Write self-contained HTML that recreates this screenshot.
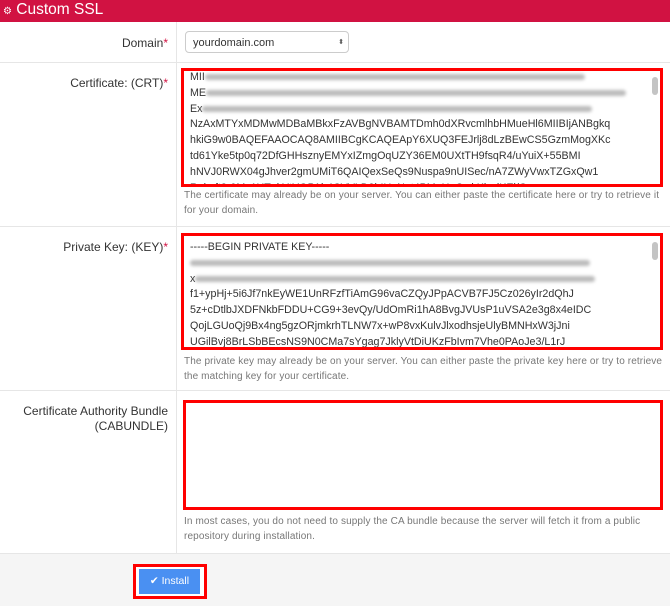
<!DOCTYPE html>
<html><head><style>
body{margin:0;width:670px;height:606px;background:#fff;font-family:"Liberation Sans",sans-serif;overflow:hidden;position:relative}
.hdr{position:absolute;left:0;top:0;width:670px;height:22px;background:#d11242;color:#fff;font-size:15.5px;line-height:20px}
.row{position:absolute;left:0;width:670px;border-bottom:1px solid #e6e6e6}
.lab{position:absolute;left:0;width:168px;text-align:right;font-size:12px;color:#333}
.lab b{color:#d11242;font-weight:normal}
.vl{position:absolute;left:176px;top:0;bottom:0;border-left:1px solid #e6e6e6}
.ta{position:absolute;border:3px solid #f00;background:#fff;font-size:10.7px;color:#333;line-height:15.8px;overflow:hidden}
.ta .in{position:absolute;left:6px;top:0;white-space:pre}
.blur{display:inline-block;height:6px;background:#bbb;border-radius:3px;filter:blur(1.5px);vertical-align:middle}
.sb{position:absolute;right:2px;top:6px;width:6px;height:18px;background:#c4c4c4;border-radius:3px}
.help{position:absolute;left:184px;font-size:10px;letter-spacing:0.12px;color:#777;line-height:14.5px;width:482px}
</style></head><body>
<div class="hdr"><span style="font-size:10px;margin-left:3px">⚙</span> Custom SSL</div>
<div class="row" style="top:22px;height:40px"><div class="vl"></div>
<div class="lab" style="top:14px">Domain<b>*</b></div>
<div style="position:absolute;left:185px;top:9px;width:164px;height:22px;border:1px solid #ccc;border-radius:4px;font-size:11px;line-height:22px;color:#333;box-sizing:border-box;padding-left:7px">yourdomain.com<span style="position:absolute;right:4px;top:0;font-size:7px;color:#555">⬍</span></div></div>
<div class="row" style="top:62px;height:164px"><div class="vl"></div>
<div class="lab" style="top:14px">Certificate: (CRT)<b>*</b></div></div>
<div class="ta" style="left:181px;top:68px;width:476px;height:113px"><div class="in" style="top:-1px">MII<span class="blur" style="width:380px"></span>
ME<span class="blur" style="width:420px"></span>
Ex<span class="blur" style="width:390px"></span>
NzAxMTYxMDMwMDBaMBkxFzAVBgNVBAMTDmh0dXRvcmlhbHMueHl6MIIBIjANBgkq
hkiG9w0BAQEFAAOCAQ8AMIIBCgKCAQEApY6XUQ3FEJrlj8dLzBEwCS5GzmMogXKc
td61Yke5tp0q72DfGHHsznyEMYxIZmgOqUZY36EM0UXtTH9fsqR4/uYuiX+55BMI
hNVJ0RWX04gJhver2gmUMiT6QAIQexSeQs9Nuspa9nUISec/nA7ZWyVwxTZGxQw1
Rqhvft3r0Mv1HTpkYtYQPAb4CVVLD9bIUqNnt4PMeHpQwkKlvxlKEl/Qce</div><div class="sb"></div></div>
<div class="help" style="top:189px">The certificate may already be on your server. You can either paste the certificate here or try to retrieve it for your domain.</div>
<div class="row" style="top:226px;height:164px"><div class="vl"></div>
<div class="lab" style="top:14px">Private Key: (KEY)<b>*</b></div></div>
<div class="ta" style="left:181px;top:233px;width:476px;height:111px"><div class="in" style="top:4px">-----BEGIN PRIVATE KEY-----
<span class="blur" style="width:400px"></span>
x<span class="blur" style="width:400px"></span>
f1+ypHj+5i6Jf7nkEyWE1UnRFzfTiAmG96vaCZQyJPpACVB7FJ5Cz026yIr2dQhJ
5z+cDtlbJXDFNkbFDDU+CG9+3evQy/UdOmRi1hA8BvgJVUsP1uVSA2e3g8x4eIDC
QojLGUoQj9Bx4ng5gzORjmkrhTLNW7x+wP8vxKulvJlxodhsjeUlyBMNHxW3jJni
UGilBvj8BrLSbBEcsNS9N0CMa7sYgag7JklyVtDiUKzFbIvm7Vhe0PAoJe3/L1rJ</div><div class="sb"></div></div>
<div class="help" style="top:355px">The private key may already be on your server. You can either paste the private key here or try to retrieve the matching key for your certificate.</div>
<div class="row" style="top:390px;height:163px"><div class="vl"></div>
<div class="lab" style="top:14px;line-height:15px">Certificate Authority Bundle<br>(CABUNDLE)</div></div>
<div class="ta" style="left:183px;top:400px;width:474px;height:104px"></div>
<div class="help" style="top:515px">In most cases, you do not need to supply the CA bundle because the server will fetch it from a public repository during installation.</div>
<div style="position:absolute;left:0;top:554px;width:670px;height:52px;background:#f5f5f5"></div>
<div style="position:absolute;left:133px;top:564px;width:68px;height:29px;border:3px solid #f00;background:#fff"></div>
<div style="position:absolute;left:139px;top:569px;width:61px;height:25px;background:#4a90f2;color:#fff;font-size:10.5px;line-height:25px;text-align:center">✔ Install</div>
</body></html>
